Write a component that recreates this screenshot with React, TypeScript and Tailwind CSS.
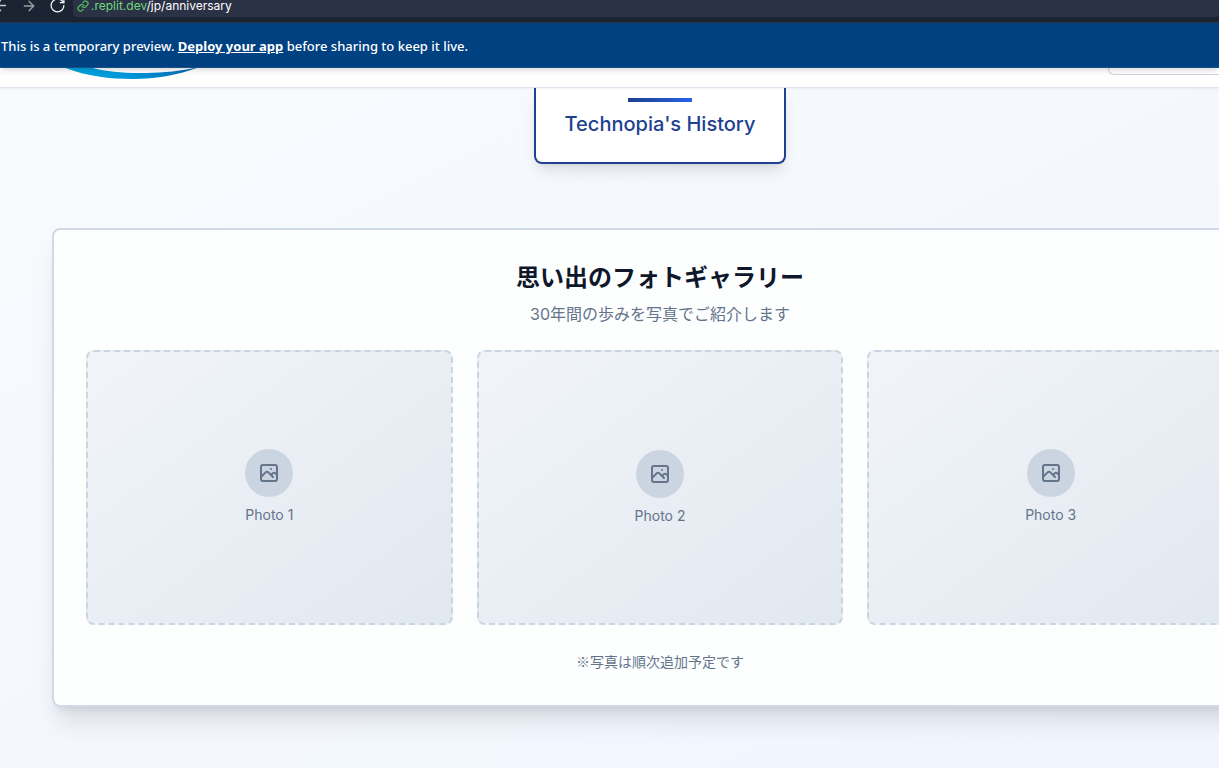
import { ArrowLeft, ArrowRight, Link, RotateCw } from "lucide-react";

const photos = ["Photo 1", "Photo 2", "Photo 3"];

function BrowserBar() {
  return (
    <div className="flex h-[23px] items-start overflow-hidden border-b border-[#2b3245] bg-[#1c2333]">
      <div className="-ml-2 flex h-[11px] items-center gap-3 text-[#9da2a6]">
        <button type="button" aria-label="Back" className="text-[#c2c8cc]">
          <ArrowLeft size={17} strokeWidth={2} />
        </button>
        <button type="button" aria-label="Forward">
          <ArrowRight size={16} strokeWidth={2} />
        </button>
        <button type="button" aria-label="Reload" className="text-[#f5f9fc]">
          <RotateCw size={17} strokeWidth={1.75} />
        </button>
      </div>
      <div className="ml-[7px] flex h-[17px] flex-1 items-start rounded-b bg-[#2b3245] pl-1">
        <a
          href="/jp/anniversary"
          className="flex h-3 items-center gap-0.5 font-['Inter',sans-serif] text-xs leading-3 text-white"
        >
          <Link size={12} strokeWidth={2.5} className="text-[#4fb860]" />
          <span>
            <span className="text-[#6bd97c]">.replit.dev</span>/jp/anniversary
          </span>
        </a>
      </div>
    </div>
  );
}

function PhotoIcon() {
  return (
    <svg
      className="size-6"
      fill="none"
      stroke="currentColor"
      strokeWidth={2}
      strokeLinecap="round"
      strokeLinejoin="round"
      viewBox="0 0 24 24"
      aria-hidden="true"
    >
      <path d="M4 16l4.586-4.586a2 2 0 012.828 0L16 16m-2-2l1.586-1.586a2 2 0 012.828 0L20 14m-6-6h.01M6 20h12a2 2 0 002-2V6a2 2 0 00-2-2H6a2 2 0 00-2 2v12a2 2 0 002 2z" />
    </svg>
  );
}

export default function App() {
  return (
    <div className="flex min-h-screen flex-col overflow-hidden bg-white font-['Inter','Noto_Sans_CJK_JP',sans-serif]">
      <BrowserBar />
      <div className="z-20 flex h-[45px] items-center border-b border-[#1a5083] bg-[#004182] px-px pt-1 font-['Noto_Sans',sans-serif] text-[13px] font-medium text-white shadow-md">
        <p>
          This is a temporary preview.{" "}
          <a href="#deploy" className="font-bold underline">
            Deploy your app
          </a>{" "}
          before sharing to keep it live.
        </p>
      </div>
      <header className="z-10 flex h-5 items-start justify-between border-b border-[#e2e5ef] bg-white pl-[60px] shadow-xs">
        <svg className="h-3 w-36" viewBox="0 0 144 12" aria-hidden="true">
          <defs>
            <linearGradient id="swoosh">
              <stop offset="0" stopColor="#00a7e1" />
              <stop offset="0.5" stopColor="#0096da" />
              <stop offset="1" stopColor="#0068b0" />
            </linearGradient>
          </defs>
          <path d="M3 -1C25 8 49 11 72 11C98 11 122 6 139 -1C116 4 99 5 80 5C59 5 43 3 29 -1Z" fill="url(#swoosh)" />
        </svg>
        <button
          type="button"
          aria-label="Language"
          className="h-[7px] w-[111px] rounded-bl-md border-b border-l border-[#cbd5e1] bg-white"
        />
      </header>
      <main className="w-[calc(100%+101px)] flex-1 bg-linear-to-br from-[#f8fafd] to-[#f0f5fe] px-[52px] pb-15">
        <a
          href="#history"
          className="mx-auto flex w-63 flex-col items-center rounded-b-lg border-x-2 border-b-2 border-[#1e4190] bg-white px-7 pt-[10px] pb-6 shadow-lg"
        >
          <span className="h-1 w-16 bg-linear-to-r from-[#1e3f8a] to-[#2563eb]" />
          <span className="mt-2 text-xl font-medium whitespace-nowrap text-[#1e4190]">Technopia's History</span>
        </a>
        <section className="mt-16 rounded-lg border-2 border-[#d0d9e8] bg-[#fdfefe] p-8 shadow-xl">
          <h2 className="text-center text-2xl font-bold text-[#0f172a]">思い出のフォトギャラリー</h2>
          <p className="mt-2 text-center text-base text-[#64748b]">30年間の歩みを写真でご紹介します</p>
          <div className="mt-6 grid grid-cols-3 gap-6">
            {photos.map((label) => (
              <figure
                key={label}
                className="flex aspect-4/3 flex-col items-center justify-center gap-2 rounded-lg border-2 border-dashed border-[#cbd5e1] bg-linear-to-br from-[#f1f5f9] to-[#e2e8f0] text-[#64748b]"
              >
                <span className="flex size-12 items-center justify-center rounded-full bg-[#cbd5e1]">
                  <PhotoIcon />
                </span>
                <figcaption className="text-sm">{label}</figcaption>
              </figure>
            ))}
          </div>
          <p className="mt-6 text-center font-['Noto_Sans_CJK_JP',sans-serif] text-sm leading-6 text-[#64748b]">
            ※写真は順次追加予定です
          </p>
        </section>
      </main>
    </div>
  );
}
